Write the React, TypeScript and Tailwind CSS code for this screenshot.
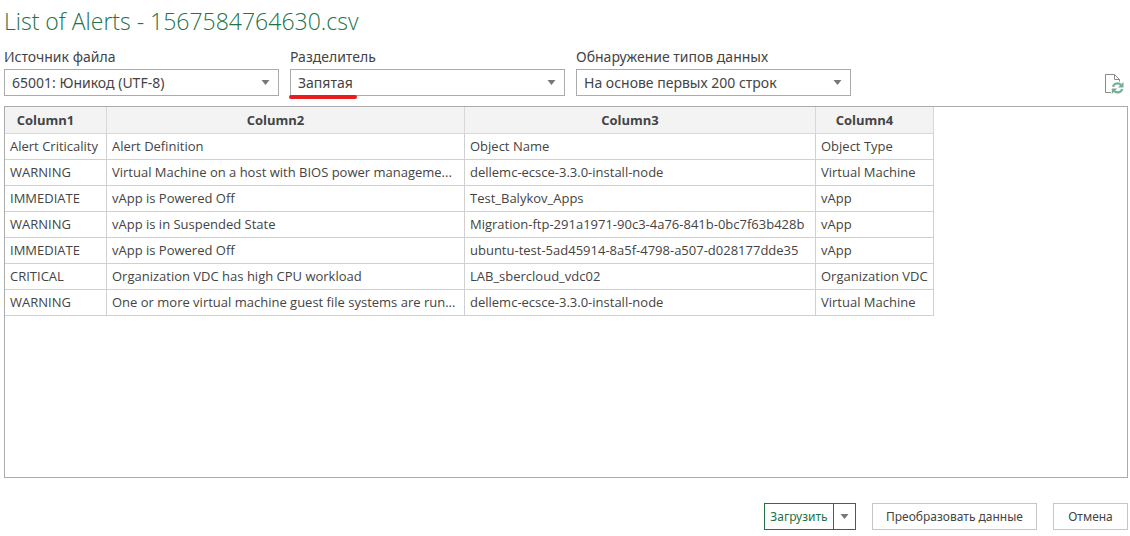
import type { ReactNode } from "react";

const columns = [
  { name: "Column1", width: "w-[102px]" },
  { name: "Column2", width: "w-[358px]" },
  { name: "Column3", width: "w-[351px]" },
  { name: "Column4", width: "w-[118px]" },
];

const rows = [
  ["Alert Criticality", "Alert Definition", "Object Name", "Object Type"],
  ["WARNING", "Virtual Machine on a host with BIOS power manageme...", "dellemc-ecsce-3.3.0-install-node", "Virtual Machine"],
  ["IMMEDIATE", "vApp is Powered Off", "Test_Balykov_Apps", "vApp"],
  ["WARNING", "vApp is in Suspended State", "Migration-ftp-291a1971-90c3-4a76-841b-0bc7f63b428b", "vApp"],
  ["IMMEDIATE", "vApp is Powered Off", "ubuntu-test-5ad45914-8a5f-4798-a507-d028177dde35", "vApp"],
  ["CRITICAL", "Organization VDC has high CPU workload", "LAB_sbercloud_vdc02", "Organization VDC"],
  ["WARNING", "One or more virtual machine guest file systems are run...", "dellemc-ecsce-3.3.0-install-node", "Virtual Machine"],
];

function Arrow() {
  return (
    <svg className="w-[9px] h-[5px]" viewBox="0 0 9 5" fill="#777777" aria-hidden="true">
      <path d="M0.5 0h8L4.5 5z" />
    </svg>
  );
}

function SelectField({ id, label, value, children }: { id: string; label: string; value: string; children?: ReactNode }) {
  return (
    <div className="w-[275px]">
      <label htmlFor={id} className="block text-sm leading-6">
        {label}
      </label>
      <div className="relative">
        <select
          id={id}
          className="block w-full h-[27px] appearance-none border border-[#ababab] bg-white pl-[7px] pr-6 text-sm leading-6 outline-none"
        >
          <option>{value}</option>
        </select>
        <span className="absolute right-[9px] top-[11px] pointer-events-none">
          <Arrow />
        </span>
        {children}
      </div>
    </div>
  );
}

function RefreshIcon() {
  return (
    <svg className="w-[19px] h-5" viewBox="0 0 19 20" fill="none" aria-hidden="true">
      <path d="M6 18.5H0.5V0.5H9.5L14.5 5.5V7.5" stroke="#8a8a8a" />
      <path d="M9.5 0.5V5.5H14.5" stroke="#8a8a8a" />
      <path d="M8 12.8C9 9.2 13.5 8.2 16 11" stroke="#72ae93" strokeWidth="2.2" />
      <path d="M18.5 8V13.4H13z" fill="#72ae93" />
      <path d="M17.2 15C16.2 18.7 11.5 19.5 9 17" stroke="#72ae93" strokeWidth="2.2" />
      <path d="M6.8 20V14.4H12.2z" fill="#72ae93" />
    </svg>
  );
}

export default function App() {
  return (
    <main className="min-h-screen flex flex-col bg-white pt-[7px] pb-[6px] pl-1 pr-[2px] text-[#444444] font-['Noto_Sans','Open_Sans',sans-serif]">
      <h1 className="text-[23px] leading-7 font-light text-[#217346] font-['Open_Sans','Noto_Sans',sans-serif]">
        List of Alerts - 1567584764630.csv
      </h1>

      <div className="mt-[10px] flex items-end gap-[11px]">
        <SelectField id="origin" label="Источник файла" value="65001: Юникод (UTF-8)" />
        <SelectField id="delimiter" label="Разделитель" value="Запятая">
          {/* Red marker under the delimiter */}
          <span className="absolute -left-px top-[26px] w-[68px] h-1 rounded-full bg-[#e81c1c]"></span>
        </SelectField>
        <SelectField id="detection" label="Обнаружение типов данных" value="На основе первых 200 строк" />
        <button type="button" aria-label="Обновить" className="ml-auto mr-1 mb-[2px]">
          <RefreshIcon />
        </button>
      </div>

      <div className="mt-[10px] flex-1 border border-[#ababab] overflow-auto">
        <table className="table-fixed w-[929px] border-separate border-spacing-0 text-[13px] leading-5 font-['Open_Sans','Noto_Sans',sans-serif]">
          <thead>
            <tr>
              {columns.map((col) => (
                <th
                  key={col.name}
                  scope="col"
                  className={`${col.width} h-[27px] pl-0 pr-5 bg-[#f3f3f3] border-r border-b border-[#d8d8d8] text-center font-bold`}
                >
                  {col.name}
                </th>
              ))}
            </tr>
          </thead>
          <tbody>
            {rows.map((row, i) => (
              <tr key={i}>
                {row.map((cell, j) => (
                  <td key={j} className="h-[26px] p-0 pb-[2px] pl-[5px] border-r border-b border-[#d0d0d0] whitespace-nowrap overflow-hidden">
                    {cell}
                  </td>
                ))}
              </tr>
            ))}
          </tbody>
        </table>
      </div>

      <div className="mt-[25px] flex justify-end gap-4 text-xs">
        <div className="flex h-[27px] border border-[#217346]">
          <button type="button" className="w-[68px] text-[#217346] whitespace-nowrap">
            Загрузить
          </button>
          <button type="button" aria-label="Другие варианты" className="w-[22px] flex items-center justify-center border-l border-[#217346]">
            <Arrow />
          </button>
        </div>
        <button type="button" className="h-[27px] w-[165px] border border-[#c6c6c6] whitespace-nowrap">
          Преобразовать данные
        </button>
        <button type="button" className="h-[27px] w-[75px] border border-[#c6c6c6]">
          Отмена
        </button>
      </div>
    </main>
  );
}
